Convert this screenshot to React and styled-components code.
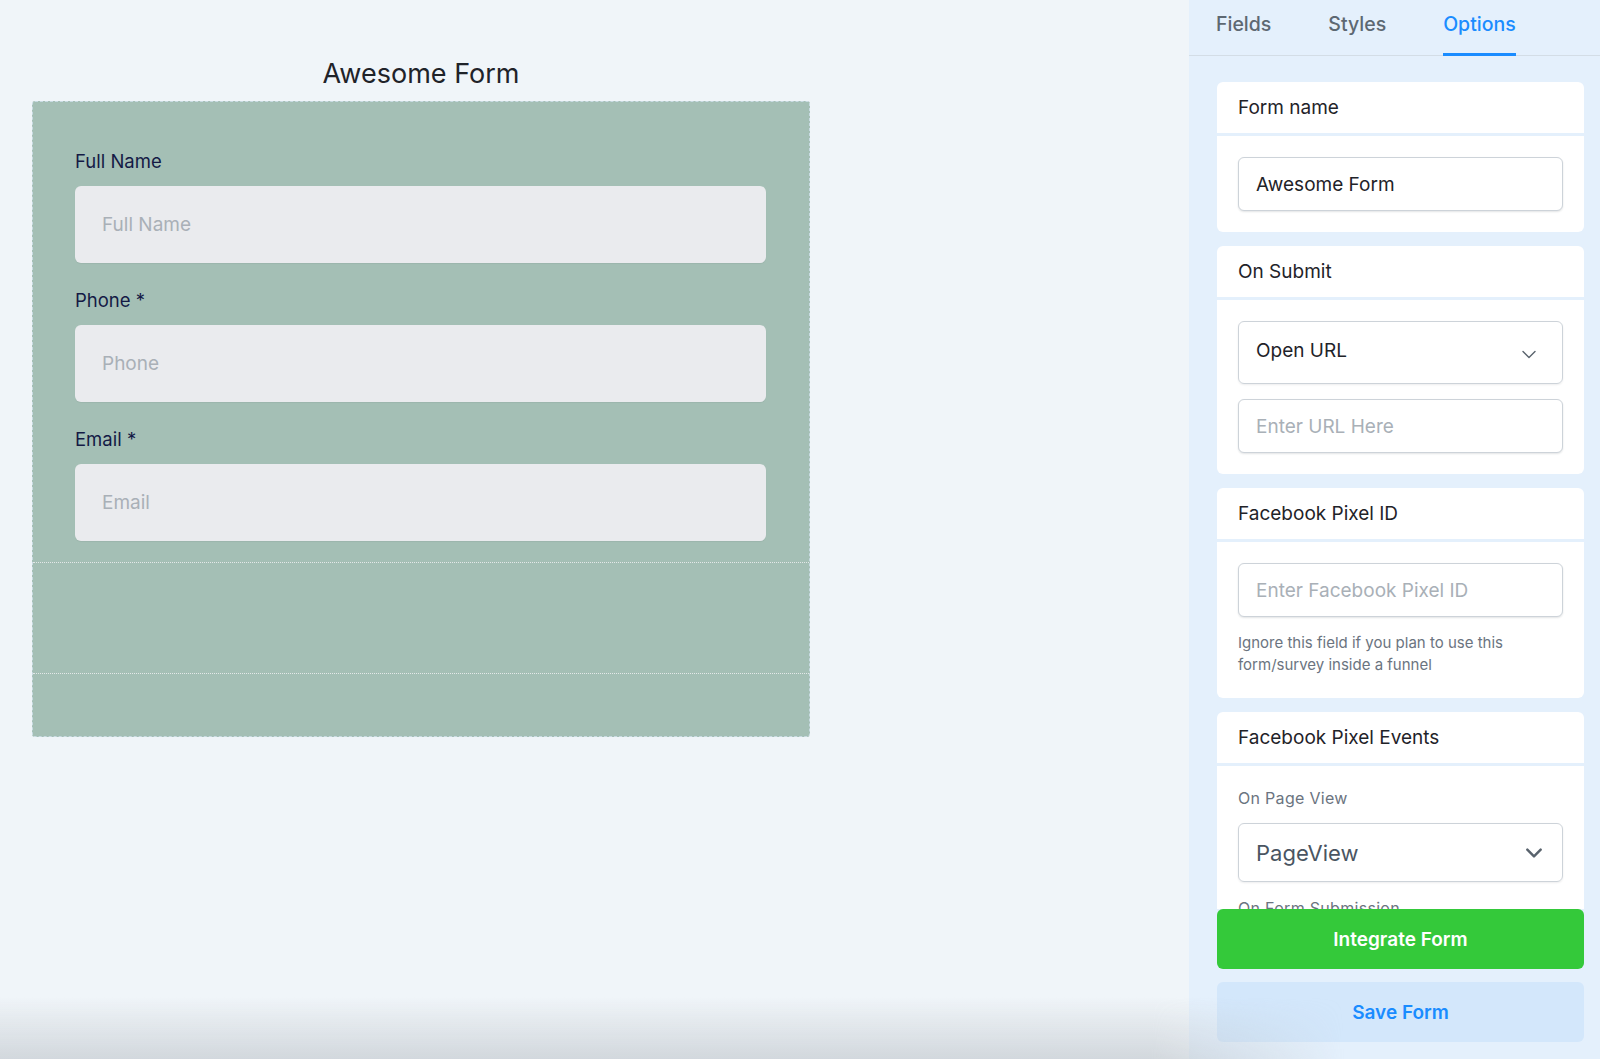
import React from 'react';
import styled, { createGlobalStyle } from 'styled-components';

const GlobalStyle = createGlobalStyle`
  html, body {
    margin: 0;
    padding: 0;
    height: 100%;
  }
  body {
    font-family: Inter, "Noto Sans", "Liberation Sans", sans-serif;
    background: #f0f5f9;
    color: #1f2329;
    overflow: hidden;
  }
  #root {
    height: 100%;
  }
  input::placeholder {
    color: #a9b0b7;
  }
`;

const Page = styled.div`
  display: flex;
  height: 1059px;
  position: relative;
`;

const Canvas = styled.main`
  flex: 1;
  padding: 56px 0 0 32px;
`;

const FormTitle = styled.h1`
  width: 778px;
  margin: 0 0 9px;
  text-align: center;
  font-size: 27px;
  line-height: 36px;
  font-weight: 400;
  color: #1f2329;
`;

const FormBox = styled.div`
  width: 776px;
  background: #a4bfb5;
  border: 1px dashed #c9dbe3;
  border-radius: 3px;
`;

const Fields = styled.div`
  padding: 47px 43px 21px 42px;
  display: flex;
  flex-direction: column;
`;

const FieldLabel = styled.label`
  display: block;
  font-size: 18.5px;
  line-height: 24px;
  color: #141a45;
  margin-top: ${(p) => (p.first ? '0' : '25px')};
  margin-bottom: 13px;
`;

const FieldInput = styled.input`
  box-sizing: border-box;
  width: 100%;
  height: 77px;
  border: none;
  border-radius: 6px;
  background: #eaebee;
  padding: 0 27px;
  font-family: inherit;
  font-size: 19px;
  color: #1f2329;
  outline: none;
  box-shadow: 0 1px 1px rgba(0, 0, 0, 0.05);
`;

const DropZone = styled.div`
  height: 110px;
  border-top: 1px dotted #e3e8e8;
  border-bottom: 1px dotted #e3e8e8;
`;

const FormFooter = styled.div`
  height: 62px;
`;

const Panel = styled.aside`
  width: 411px;
  background: #e4f0fc;
  display: flex;
  flex-direction: column;
`;

const Tabs = styled.nav`
  display: flex;
  gap: 57px;
  height: 55px;
  padding: 0 27px;
  border-bottom: 1px solid #d3dde6;
  flex-shrink: 0;
`;

const Tab = styled.div`
  position: relative;
  font-size: 19.5px;
  line-height: 49px;
  font-weight: 500;
  color: ${(p) => (p.active ? '#1a8cff' : '#5d6872')};
  border-bottom: 3px solid ${(p) => (p.active ? '#1a8cff' : 'transparent')};
  margin-bottom: -1px;
`;

const Scroll = styled.div`
  flex: 1;
  overflow: hidden;
  padding: 26px 16px 0 28px;
  display: flex;
  flex-direction: column;
  gap: 14px;
`;

const Card = styled.section`
  background: #ffffff;
  border-radius: 6px;
  flex-shrink: 0;
`;

const CardHeader = styled.div`
  height: 51px;
  padding: 0 21px;
  display: flex;
  align-items: center;
  font-size: 19px;
  color: #1f2329;
  border-bottom: 3px solid #e4f0fc;
`;

const CardBody = styled.div`
  padding: 21px 21px 21px;
  display: flex;
  flex-direction: column;
  gap: 15px;
`;

const TextInput = styled.input`
  box-sizing: border-box;
  width: 100%;
  height: 54px;
  border: 1px solid #cdd3d9;
  border-radius: 6px;
  background: #fff;
  padding: 0 17px;
  font-family: inherit;
  font-size: 19px;
  color: #1f2329;
  outline: none;
  box-shadow: 0 1px 2px rgba(20, 30, 40, 0.12);
`;

const Select = styled.div`
  box-sizing: border-box;
  height: ${(p) => (p.large ? '59px' : '63px')};
  border: 1px solid #cdd3d9;
  border-radius: 6px;
  padding: ${(p) => (p.large ? '0 20px 0 17px' : '0 26px 4px 17px')};
  display: flex;
  align-items: center;
  justify-content: space-between;
  font-size: ${(p) => (p.large ? '22px' : '19px')};
  color: ${(p) => (p.large ? '#4a5562' : '#1f2329')};
  box-shadow: 0 1px 2px rgba(20, 30, 40, 0.08);

  svg {
    margin-top: ${(p) => (p.large ? '0' : '8px')};
  }
`;

const HelpText = styled.p`
  margin: 0 0 1px;
  font-size: 15px;
  line-height: 22px;
  color: #6b7480;
`;

const SubLabel = styled.div`
  font-size: 16px;
  line-height: 22px;
  color: #6b7480;
  letter-spacing: 0.3px;
  margin: 0 0 -1px;
`;

const Footer = styled.div`
  padding: 0 16px 17px 28px;
  display: flex;
  flex-direction: column;
  gap: 13px;
  flex-shrink: 0;
`;

const ActionButton = styled.button`
  height: 60px;
  border: none;
  border-radius: 6px;
  font-family: inherit;
  font-size: 19px;
  font-weight: 600;
  cursor: pointer;
  background: ${(p) => (p.primary ? '#34c93a' : '#d3e7fb')};
  color: ${(p) => (p.primary ? '#ffffff' : '#1a8cff')};
`;

const BottomShade = styled.div`
  position: absolute;
  left: 0;
  right: 0;
  bottom: 0;
  height: 62px;
  pointer-events: none;
  background: linear-gradient(to bottom, rgba(190, 196, 202, 0), rgba(190, 196, 202, 0.6));
  -webkit-mask-image: linear-gradient(to right, #000 72%, transparent 84%);
  mask-image: linear-gradient(to right, #000 72%, transparent 84%);
`;

function Chevron({ size = 14, width = 1.6 }) {
  return (
    <svg width={size} height={size / 2 + 2} viewBox="0 0 14 9" fill="none">
      <path d="M1 1.5 L7 7.5 L13 1.5" stroke="#59636d" strokeWidth={width} strokeLinecap="round" strokeLinejoin="round" />
    </svg>
  );
}

const fields = [
  { label: 'Full Name', placeholder: 'Full Name' },
  { label: 'Phone *', placeholder: 'Phone' },
  { label: 'Email *', placeholder: 'Email' },
];

export default function App() {
  return (
    <>
      <GlobalStyle />
      <Page>
        <Canvas>
          <FormTitle>Awesome Form</FormTitle>
          <FormBox>
            <Fields>
              {fields.map((f, i) => (
                <React.Fragment key={f.label}>
                  <FieldLabel first={i === 0}>{f.label}</FieldLabel>
                  <FieldInput placeholder={f.placeholder} />
                </React.Fragment>
              ))}
            </Fields>
            <DropZone />
            <FormFooter />
          </FormBox>
        </Canvas>

        <Panel>
          <Tabs>
            <Tab>Fields</Tab>
            <Tab>Styles</Tab>
            <Tab active>Options</Tab>
          </Tabs>

          <Scroll>
            <Card>
              <CardHeader>Form name</CardHeader>
              <CardBody>
                <TextInput defaultValue="Awesome Form" />
              </CardBody>
            </Card>

            <Card>
              <CardHeader>On Submit</CardHeader>
              <CardBody>
                <Select>
                  <span>Open URL</span>
                  <Chevron size={14} width={1.4} />
                </Select>
                <TextInput placeholder="Enter URL Here" />
              </CardBody>
            </Card>

            <Card>
              <CardHeader>Facebook Pixel ID</CardHeader>
              <CardBody>
                <TextInput placeholder="Enter Facebook Pixel ID" />
                <HelpText>
                  Ignore this field if you plan to use this
                  <br />
                  form/survey inside a funnel
                </HelpText>
              </CardBody>
            </Card>

            <Card>
              <CardHeader>Facebook Pixel Events</CardHeader>
              <CardBody>
                <SubLabel>On Page View</SubLabel>
                <Select large>
                  <span>PageView</span>
                  <Chevron size={16} width={2.2} />
                </Select>
                <SubLabel>On Form Submission</SubLabel>
              </CardBody>
            </Card>
          </Scroll>

          <Footer>
            <ActionButton primary>Integrate Form</ActionButton>
            <ActionButton>Save Form</ActionButton>
          </Footer>
        </Panel>
        <BottomShade />
      </Page>
    </>
  );
}
